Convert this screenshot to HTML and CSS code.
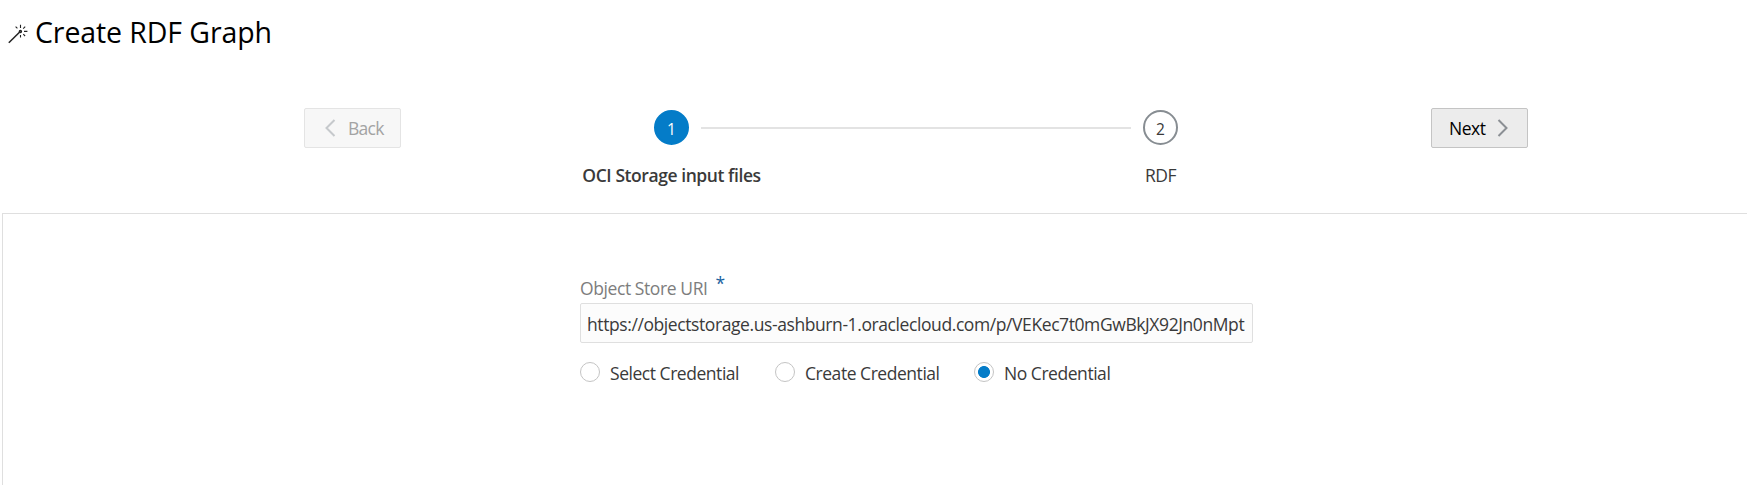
FILE: index.html
```
<!DOCTYPE html>
<html lang="en">
<head>
<meta charset="utf-8">
<title>Create RDF Graph</title>
<link rel="stylesheet" href="styles.css">
</head>
<body>
<header class="title">
  <svg class="wand" width="20" height="20" viewBox="0 0 20 20" fill="none" stroke="#222" stroke-width="1.5"><path d="M.8 18.8 11.5 8.2"/><circle cx="12.4" cy="7.4" r="1"/><path stroke-width="1.1" d="M12.5.8v3.2M12.5 11v2.4M16 7.4h3.4M7.6 2.6l1.8 1.8M17.2 2.6l-2 2M15.3 10.2l1.8 1.8"/></svg>
  <h1>Create RDF Graph</h1>
</header>
<nav class="wizard">
  <button class="btn back" disabled><svg width="11" height="18" viewBox="0 0 11 18"><path d="M9.5 1 1.5 9l8 8"/></svg><span class="back-text">Back</span></button>
  <ol class="train">
    <li class="step"><span class="dot current">1</span><span class="label strong">OCI Storage input files</span></li>
    <li class="rail"></li>
    <li class="step"><span class="dot">2</span><span class="label">RDF</span></li>
  </ol>
  <button class="btn next"><span>Next</span><svg width="11" height="18" viewBox="0 0 11 18"><path d="m1.5 1 8 8-8 8"/></svg></button>
</nav>
<main class="panel">
  <form class="form">
    <div class="field-label"><span class="label-text">Object Store URI</span><span class="star">*</span></div>
    <div class="input"><span class="uri">https://objectstorage.us-ashburn-1.oraclecloud.com/p/VEKec7t0mGwBkJX92Jn0nMpt</span></div>
    <div class="radios">
      <label class="radio first"><i class="ring"></i><span>Select Credential</span></label>
      <label class="radio second"><i class="ring"></i><span>Create Credential</span></label>
      <label class="radio"><i class="ring on"></i><span>No Credential</span></label>
    </div>
  </form>
</main>
</body>
</html>
```
FILE: styles.css
```
* { box-sizing: border-box; }
body { margin: 0; height: 485px; overflow: hidden; background: #fff; color: #3a3a3a; font: 400 17.5px/24px "Open Sans", "Noto Sans", sans-serif; letter-spacing: -0.46px; white-space: nowrap; }
.title { display: flex; height: 108px; padding: 13px 0 0 8px; }
.wand { margin: 11px 7px 0 0; }
h1 { margin: 0; font-size: 28.5px; line-height: 38px; font-weight: 400; color: #000; letter-spacing: -0.1px; }
.wizard { display: flex; height: 105px; padding-left: 304px; align-items: flex-start; }
.btn { display: flex; align-items: center; width: 97px; height: 40px; padding: 0; border: 1px solid #c4c4c4; border-radius: 2px; background: #ececec; color: #000; font: inherit; letter-spacing: inherit; }
.btn svg { fill: none; stroke: #8b8f94; stroke-width: 2; flex: none; }
.back { padding-left: 20px; border-color: #e4e4e4; background: #f7f7f7; color: #a3a3a3; }
.back svg { stroke: #c6c9cc; margin-right: 12px; }
.back-text { letter-spacing: -0.75px; }
.next { padding-left: 17px; }
.next svg { margin-left: auto; margin-right: 19px; }
.train { display: flex; width: 660px; margin: 2px 185px 0; padding: 0; list-style: none; justify-content: space-between; }
.step { display: flex; flex-direction: column; align-items: center; width: 171px; }
.rail { width: 430px; height: 2px; margin: 17px -56px 0 -56px; background: #e3e3e3; flex: none; }
.dot { width: 35px; height: 35px; border: 2px solid #878d92; border-radius: 50%; font-size: 15.5px; line-height: 35px; text-align: center; letter-spacing: 0; }
.current { border-color: #047cc8; background: #047cc8; color: #fff; }
.label { margin-top: 18px; }
.strong { font-weight: 600; letter-spacing: -0.43px; }
.panel { margin-left: 2px; height: 272px; border: solid #dfdfdf; border-width: 1px 0 0 1px; padding: 62px 0 0 577px; }
.form { width: 673px; }
.field-label { display: flex; height: 27px; color: #7d7d7d; letter-spacing: -0.41px; }
.star { margin: -5px 0 0 8px; color: #1a62a0; }
.input { height: 40px; padding: 8px 0 0 6px; border: 1px solid #dfdfdf; border-radius: 2px; background: #fcfcfc; }
.uri { letter-spacing: -0.41px; }
.radios { display: flex; height: 20px; margin-top: 19px; }
.radio { display: flex; gap: 10px; height: 20px; line-height: 23px; }
.first { width: 195px; }
.second { width: 199px; }
.ring { width: 20px; height: 20px; border: 1px solid #c4c4c4; border-radius: 50%; flex: none; }
.on { background: radial-gradient(circle, #047cc8 5.6px, transparent 6.3px); }
```
